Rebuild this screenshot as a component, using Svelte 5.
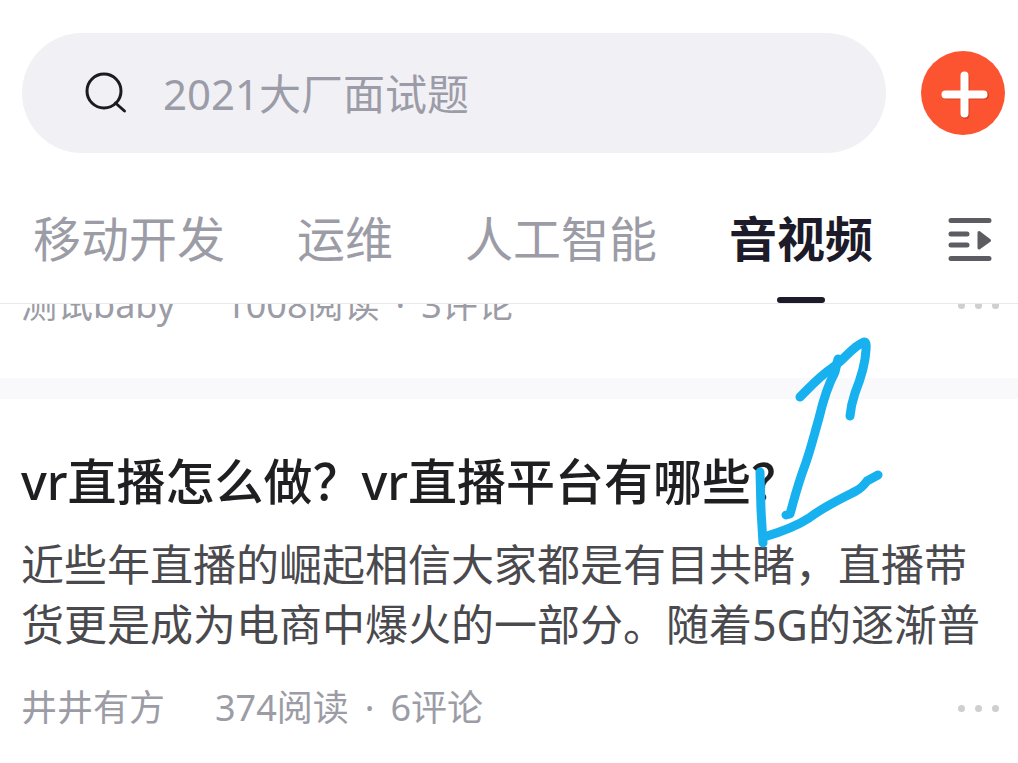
<script lang="ts">
  let keyword = "";
  let active = "音视频";

  const tabs = ["移动开发", "运维", "人工智能", "音视频"];

  const articles = [
    {
      title: "",
      summary: "",
      author: "测试baby",
      reads: 1008,
      comments: 3,
    },
    {
      title: "vr直播怎么做？vr直播平台有哪些？",
      summary:
        "近些年直播的崛起相信大家都是有目共睹，直播带货更是成为电商中爆火的一部分。随着5G的逐渐普",
      author: "井井有方",
      reads: 374,
      comments: 6,
    },
  ];
</script>

<div class="page">
  <header>
    <div class="top">
      <label class="search">
        <svg width="44" height="44" viewBox="0 0 44 44" aria-hidden="true">
          <circle cx="20" cy="20" r="17" />
          <path d="M31.5 32 L40.5 40" />
        </svg>
        <input
          type="text"
          aria-label="搜索"
          placeholder="2021大厂面试题"
          bind:value={keyword}
        />
      </label>
      <button class="add" aria-label="发布">
        <svg width="84" height="84" viewBox="0 0 84 84">
          <path class="shadow" d="M44.5 26 V64 M26 44.5 H64" />
          <path d="M43.5 24.5 V62.5 M24.5 43.5 H62.5" />
        </svg>
      </button>
    </div>

    <nav>
      {#each tabs as tab}
        <button
          class="tab"
          class:active={tab === active}
          on:click={() => (active = tab)}
        >
          {tab}
        </button>
      {/each}
      <button class="manage" aria-label="管理频道">
        <svg width="44" height="46" viewBox="0 0 44 46">
          <path d="M3 3.5 H41 M3 17 H19 M3 28 H19 M3 41.5 H41" />
          <path class="arrow" d="M31 15.5 L41.5 23.5 L31 31 Z" />
        </svg>
      </button>
    </nav>
  </header>

  <main>
    {#each articles as article}
      <article>
        {#if article.title}
          <h2>{article.title}</h2>
          <p>{article.summary}</p>
        {/if}
        <div class="meta">
          <span class="author">{article.author}</span>
          <span>{article.reads}阅读</span>
          <span class="dot">·</span>
          <span>{article.comments}评论</span>
          <button class="more" aria-label="更多">
            <i></i><i></i><i></i>
          </button>
        </div>
      </article>
    {/each}
  </main>

  <svg class="scribble" width="180" height="240" viewBox="0 0 180 240">
    <path d="M60 77 C72 65 80 56 92 48 C105 39 113 26 124 22 Q127 22 126 30 C125 48 119 63 115 73 Q111 85 110 96" />
    <path d="M98 39 L95 52 C88 65 83 81 79 98 C73 119 70 132 64 148 C57 167 54 180 50 194 L46 195" />
    <path d="M20 152 L21 190 L23 223" />
    <path d="M24 217 C44 211 57 206 69 198 C85 186 99 180 116 171 Q122 168 127 161 L138 155" />
  </svg>
</div>

<style>
  :global(body) {
    margin: 0;
    background-color: #fff;
  }

  .page {
    position: relative;
    overflow: hidden;
    font-family: "Noto Sans", "Noto Sans CJK SC", sans-serif;
    font-weight: 400;
    color: #9c9ca6;
  }

  button {
    padding: 0;
    border: none;
    background: none;
    font: inherit;
    color: inherit;
    cursor: pointer;
  }

  svg {
    display: block;
    fill: none;
    stroke-linecap: round;
    stroke-linejoin: round;
  }

  header {
    position: relative;
    z-index: 1;
    padding-top: 33px;
    background-color: #fff;
    border-bottom: 1px solid #e9e9ec;
  }

  .top {
    display: flex;
    align-items: center;
    gap: 35px;
    padding: 0 13px 0 22px;
  }

  .search {
    flex: 1;
    display: flex;
    align-items: center;
    gap: 35px;
    height: 120px;
    padding: 0 62px;
    border-radius: 60px;
    background-color: #f1f1f5;
  }

  .search svg {
    stroke: #1c1c20;
    stroke-width: 3;
    flex: none;
  }

  .search input {
    flex: 1;
    min-width: 0;
    padding: 0;
    border: none;
    outline: none;
    background: none;
    font: inherit;
    font-size: 42px;
    color: #1d1c28;
  }

  .search input::placeholder {
    color: #9c9ca8;
    opacity: 1;
  }

  .add {
    flex: none;
    border-radius: 50%;
    background-color: #fc5431;
  }

  .add svg {
    stroke: #fff;
    stroke-width: 8;
  }

  .add .shadow {
    stroke: #d04025;
  }

  nav {
    display: flex;
    align-items: stretch;
    gap: 72px;
    height: 126px;
    margin-top: 24px;
    padding: 0 26px 0 33px;
  }

  .tab {
    position: relative;
    padding-bottom: 8px;
    font-size: 48px;
    white-space: nowrap;
  }

  .tab.active {
    color: #1d1b29;
    font-weight: 700;
  }

  .tab.active::after {
    content: "";
    position: absolute;
    left: 50%;
    bottom: 0;
    width: 48px;
    height: 6px;
    margin-left: -24px;
    border-radius: 3px;
    background-color: #1d1b29;
  }

  .manage {
    margin-left: auto;
  }

  .manage svg {
    stroke: #5c5c62;
    stroke-width: 5;
  }

  .manage .arrow {
    fill: #5c5c62;
    stroke-width: 3;
  }

  /* the first card is scrolled half under the header */
  main {
    margin-top: -27px;
  }

  article {
    padding: 0 19px 45px 21px;
  }

  article + article {
    padding-top: 50px;
    border-top: 21px solid #f9f9fb;
  }

  h2 {
    margin: 0 0 22px;
    font-size: 49px;
    line-height: 64px;
    font-weight: 500;
    color: #1f1f22;
  }

  p {
    margin: 0 0 25px;
    font-size: 43px;
    line-height: 60px;
    color: #4a4a4e;
  }

  .meta {
    display: flex;
    align-items: center;
    height: 56px;
    font-size: 36px;
    line-height: 56px;
  }

  .author {
    margin-right: 50px;
  }

  .dot {
    margin: 0 16px;
  }

  .more {
    display: flex;
    gap: 10px;
    margin-left: auto;
  }

  .more i {
    width: 7px;
    height: 7px;
    border-radius: 50%;
    background-color: #cfcfd2;
  }

  /* hand-drawn note over the feed */
  .scribble {
    position: absolute;
    z-index: 2;
    top: 320px;
    left: 740px;
    stroke: #18b1ef;
    stroke-width: 9;
    pointer-events: none;
  }
</style>
